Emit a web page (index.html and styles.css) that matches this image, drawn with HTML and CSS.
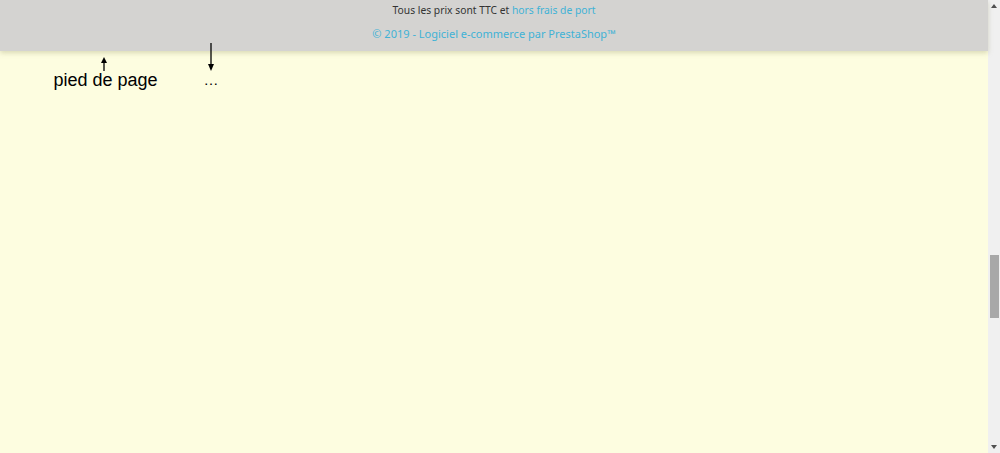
FILE: index.html
```html
<!DOCTYPE html>
<html lang="fr">
<head>
<meta charset="utf-8">
<title>Pied de page</title>
<link rel="stylesheet" href="styles.css">
</head>
<body>
<div class="screen">
  <div class="page">
    <footer class="footer">
      <p class="line first">Tous les prix sont TTC et <a class="link" href="#">hors frais de port</a></p>
      <p class="line copy"><a class="link" href="#">© 2019 - Logiciel e-commerce par PrestaShop™</a></p>
    </footer>
    <div class="note note-footer">
      <svg class="arrow arrow-up" width="10" height="14" viewBox="0 0 10 14"><path d="M5 14V4" stroke="#000" stroke-width="1.3"/><path d="M5 0L8 6H2Z" fill="#000"/></svg>
      <span class="label">pied de page</span>
    </div>
    <div class="note note-more">
      <svg class="arrow arrow-down" width="10" height="28" viewBox="0 0 10 28"><path d="M5 0V22" stroke="#000" stroke-width="1.3"/><path d="M5 28L8 21H2Z" fill="#000"/></svg>
      <span class="dots">…</span>
    </div>
  </div>
  <div class="scrollbar">
    <span class="sb-btn sb-up"></span>
    <div class="sb-track"><span class="sb-thumb"></span></div>
    <span class="sb-btn sb-down"></span>
  </div>
</div>
</body>
</html>
```
FILE: styles.css
```css
html, body {
  margin: 0;
  padding: 0;
  height: 100%;
  overflow: hidden;
}
body {
  font-family: "Noto Sans", "Open Sans", sans-serif;
  background: #fdfde0;
}
.screen {
  display: flex;
  height: 453px;
  width: 1000px;
}
.page {
  position: relative;
  flex: 0 0 988px;
  background: #fdfde0;
}
.footer {
  height: 51px;
  background: #d4d3d1;
  box-shadow: 0 2px 5px rgba(150, 150, 100, 0.35);
  text-align: center;
  box-sizing: border-box;
  padding-top: 3px;
}
.line {
  margin: 0;
  font-size: 11px;
  line-height: 15px;
  color: #333;
}
.first {
  font-size: 10.3px;
}
.copy {
  margin-top: 8px;
}
.link {
  color: #3fb2d6;
  text-decoration: none;
}
.note {
  position: absolute;
  display: flex;
  flex-direction: column;
  align-items: center;
  font-family: "Liberation Sans", Arial, sans-serif;
  color: #000;
}
.note-footer {
  left: 54px;
  top: 57px;
  width: 103px;
}
.arrow-up {
  display: block;
  margin-right: 3px;
}
.label {
  font-size: 18px;
  line-height: 20px;
  margin-top: -1px;
  white-space: nowrap;
}
.note-more {
  left: 201px;
  top: 43px;
  width: 20px;
}
.arrow-down {
  display: block;
}
.dots {
  font-size: 15px;
  line-height: 14px;
  margin-top: 2px;
}
.scrollbar {
  flex: 0 0 12px;
  background: #f0f0f0;
  display: flex;
  flex-direction: column;
}
.sb-btn {
  height: 17px;
  position: relative;
}
.sb-up::after, .sb-down::after {
  content: "";
  position: absolute;
  left: 3px;
  width: 0;
  height: 0;
  border-left: 3px solid transparent;
  border-right: 3px solid transparent;
}
.sb-up::after {
  top: 4px;
  border-bottom: 4px solid #505050;
}
.sb-down::after {
  bottom: 4px;
  border-top: 4px solid #505050;
}
.sb-track {
  flex: 1;
  padding-top: 238px;
  display: flex;
  justify-content: center;
}
.sb-thumb {
  display: block;
  width: 9px;
  height: 63px;
  margin-left: 1px;
  background: #a8a8a8;
}
```
